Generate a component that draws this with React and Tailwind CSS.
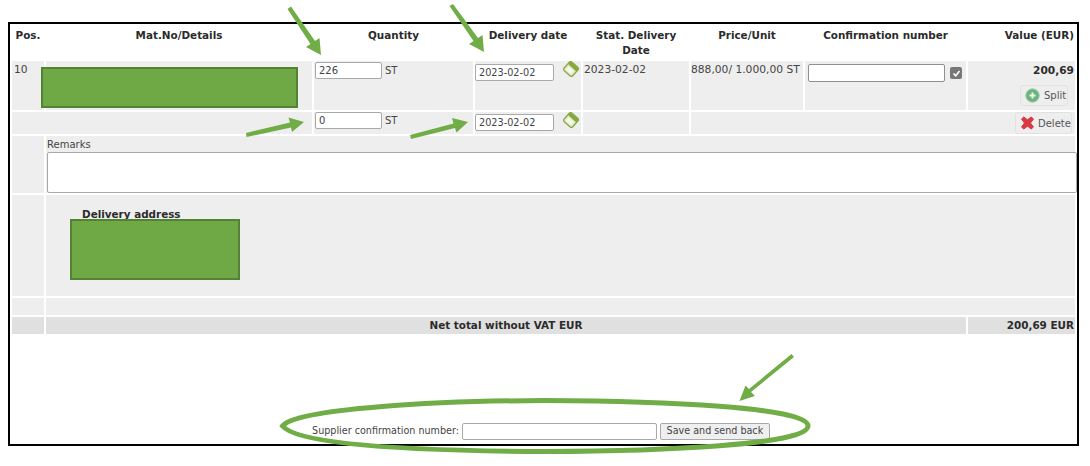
import React from "react";

const font = { fontFamily: '"DejaVu Sans", Verdana, sans-serif' };

function Cal() {
  return (
    <svg width="16" height="16" viewBox="0 0 16 16" className="block">
      <g transform="rotate(42 8 8)">
        <rect x="2.200" y="2.200" width="11.600" height="11.600" rx="2" fill="#dfe8c4" stroke="#8aa84a" strokeWidth="1.300" />
        <rect x="2.500" y="2.500" width="11" height="3.800" rx="1" fill="#86a93a" />
        <rect x="4.500" y="7.500" width="7" height="4.500" fill="#f6f8e8" />
      </g>
    </svg>
  );
}

function PlusIcon() {
  return (
    <svg width="15" height="15" viewBox="0 0 15 15" className="block shrink-0">
      <circle cx="7.500" cy="7.500" r="6.800" fill="#6db37d" stroke="#a8d2b0" strokeWidth="1" />
      <path d="M7.500 4.500v6M4.500 7.500h6" stroke="#e8f7ea" strokeWidth="2" />
    </svg>
  );
}

function XIcon() {
  return (
    <svg width="15" height="14" viewBox="0 0 15 14" className="block shrink-0">
      <path d="M1.500 3 3.800 1 7.500 3.800 11.200 1 13.500 3 10.500 7 13.500 11 11.200 13 7.500 10.200 3.800 13 1.500 11 4.500 7Z" fill="#dc3844" stroke="#cf3a46" strokeWidth="1" strokeLinejoin="round" />
    </svg>
  );
}

function Field({ value, className }) {
  return (
    <input
      readOnly
      value={value}
      className={"block h-[17px] rounded-[2px] border border-[#a9a9a9] bg-white px-[3px] leading-none text-[#444] outline-none " + className}
      style={font}
    />
  );
}

const th = "align-top p-0 pt-[2px] text-center text-[10.4px] font-bold leading-[15px] text-[#2b2b2b]";
const td = "bg-[#eeeeee] align-top p-0";

export default function App() {
  return (
    <div className="relative h-[466px] w-[1090px] overflow-hidden bg-white pl-[8px] pt-[22px] text-[10.700px] text-[#444]" style={font}>
      <div className="flex h-[424px] w-[1071px] flex-col border-2 border-black">
        <table className="w-[1067px] table-fixed border-separate border-spacing-[2px]">
          <colgroup>
            <col className="w-[32px]" />
            <col className="w-[266px]" />
            <col className="w-[159px]" />
            <col className="w-[106px]" />
            <col className="w-[106px]" />
            <col className="w-[112px]" />
            <col className="w-[161px]" />
            <col className="w-[107px]" />
          </colgroup>
          <thead>
            <tr className="h-[33px]">
              <th className={th}>Pos.</th>
              <th className={th}>Mat.No/Details</th>
              <th className={th}>Quantity</th>
              <th className={th}>Delivery date</th>
              <th className={th}>Stat. Delivery<br />Date</th>
              <th className={th}>Price/Unit</th>
              <th className={th}>Confirmation number</th>
              <th className={th + " pr-[1px] text-right"}>Value (EUR)</th>
            </tr>
          </thead>
          <tbody>
            <tr className="h-[49px]">
              <td className={td + " pl-[2px] pt-[2px] leading-[14px]"}>10</td>
              <td className={td}></td>
              <td className={td}>
                <div className="flex items-start gap-[3px] pl-[1px] pt-[1px] text-[10px]">
                  <Field value="226" className="w-[67px] text-[10px]" />
                  <span className="leading-[17px]">ST</span>
                </div>
              </td>
              <td className={td}>
                <div className="flex items-start pt-[3px]">
                  <Field value="2023-02-02" className="w-[79px] text-[9.700px]" />
                  <span className="ml-[9px] -mt-[3px]"><Cal /></span>
                </div>
              </td>
              <td className={td + " pl-[1px] pt-[2px] leading-[14px]"}>2023-02-02</td>
              <td className={td + " pt-[2px] leading-[14px] whitespace-nowrap"}>888,00/ 1.000,00 ST</td>
              <td className={td}>
                <div className="flex items-start pl-[3px] pt-[3px]">
                  <input readOnly className="block h-[18px] w-[137px] rounded-[2px] border border-[#8f8f8f] bg-white" />
                  <span className="ml-[5px] mt-[3px] flex h-[12px] w-[12px] items-center justify-center rounded-[2px] bg-[#777]">
                    <svg width="9" height="9" viewBox="0 0 9 9"><path d="M1.500 4.500 3.700 6.800 7.500 2" fill="none" stroke="#fff" strokeWidth="1.600" /></svg>
                  </span>
                </div>
              </td>
              <td className={td}>
                <div className="flex flex-col items-end pr-[1px] pt-[2px]">
                  <span className="text-[10.600px] font-bold leading-[14px] text-[#2b2b2b]">200,69</span>
                  <button className="mr-[6px] mt-[8px] flex h-[21px] w-[48px] items-center gap-[4px] whitespace-nowrap rounded-[3px] border border-[#e2e2e2] bg-[#eeeeee] pl-[4px] text-[10px] text-[#555]" style={font}>
                    <PlusIcon />Split
                  </button>
                </div>
              </td>
            </tr>
            <tr className="h-[22px]">
              <td className={td} colSpan={2}></td>
              <td className={td}>
                <div className="flex items-start gap-[3px] pl-[1px] text-[10px]">
                  <Field value="0" className="w-[67px] text-[10px]" />
                  <span className="leading-[17px]">ST</span>
                </div>
              </td>
              <td className={td}>
                <div className="flex items-start pt-[2px]">
                  <Field value="2023-02-02" className="w-[79px] text-[9.700px]" />
                  <span className="ml-[9px] -mt-[2px]"><Cal /></span>
                </div>
              </td>
              <td className={td}></td>
              <td className={td} colSpan={3}>
                <div className="flex h-[22px] justify-end overflow-visible pr-[3px]">
                  <button className="flex h-[22px] w-[57px] items-center gap-[3px] whitespace-nowrap rounded-[3px] border border-[#e2e2e2] bg-[#eeeeee] pl-[4px] text-[10px] text-[#555]" style={font}>
                    <XIcon />Delete
                  </button>
                </div>
              </td>
            </tr>
            <tr className="h-[57px]">
              <td className={td}></td>
              <td className={td} colSpan={7}>
                <div className="pl-[1px] pt-[2px] text-[10px] leading-[14px]">Remarks</div>
                <textarea readOnly className="ml-[1px] block h-[41px] w-[1030px] resize-none rounded-[2px] border border-[#a9a9a9] bg-white" />
              </td>
            </tr>
            <tr className="h-[101px]">
              <td className={td}></td>
              <td className={td} colSpan={7}>
                <div className="pl-[36px] pt-[12px] text-[10.400px] font-bold leading-[14px] text-[#2b2b2b]">Delivery address</div>
              </td>
            </tr>
            <tr className="h-[17px]">
              <td className={td}></td>
              <td className={td} colSpan={7}></td>
            </tr>
            <tr className="h-[17px]">
              <td className="bg-[#e0e0e0] p-0"></td>
              <td className="bg-[#e0e0e0] p-0 text-center text-[10.400px] font-bold leading-[15px] text-[#2b2b2b]" colSpan={6}>Net total without VAT EUR</td>
              <td className="bg-[#e0e0e0] p-0 pr-[1px] text-right text-[10.400px] font-bold leading-[15px] text-[#2b2b2b]">200,69 EUR</td>
            </tr>
          </tbody>
        </table>
        <div className="mt-auto flex items-center justify-center gap-[3px] pb-[4px] pr-[5px] text-[9.600px]">
          <span className="whitespace-nowrap">Supplier confirmation number:</span>
          <input readOnly className="block h-[17px] w-[195px] rounded-[2px] border border-[#a9a9a9] bg-white" />
          <button className="flex h-[17px] w-[110px] items-center justify-center whitespace-nowrap rounded-[2px] border border-[#a9a9a9] bg-[#efefef] text-[9.600px] text-[#444]" style={font}>Save and send back</button>
        </div>
      </div>

      <div className="absolute left-[41px] top-[67px] h-[41px] w-[257px] border-2 border-[#548235] bg-[#6fa946]" />
      <div className="absolute left-[70px] top-[219px] h-[61px] w-[170px] border-2 border-[#548235] bg-[#6fa946]" />

      <svg className="pointer-events-none absolute left-0 top-0" width="1090" height="466" viewBox="0 0 1090 466">
        <g fill="#70ad47" stroke="none">
          <path d="M287.500 9 291 6.500 315 41 319.500 38 321 55 306 47 310.500 44Z" />
          <path d="M449.500 6 453 4 478 38 482.500 35 484 52 469 44 473.500 41Z" />
          <path d="M246 133 246.500 137 291 127.500 292 132 304 122 288.500 117.500 290 122.500Z" />
          <path d="M410 135 411 139 455 128 456.500 132.500 468 122 452 118 453.500 123.500Z" />
          <path d="M791.500 354 794 357 751 392 755 396 739.500 401 745.500 385.500 749 389Z" />
        </g>
        <path d="M282.500 426 C 296 408, 440 401, 545 400.500 C 660 401, 808 407, 808 426 C 808 445, 660 451, 545 451.500 C 440 451, 300 447, 282.500 426 Z" fill="none" stroke="#70ad47" strokeWidth="5" />
      </svg>
    </div>
  );
}
